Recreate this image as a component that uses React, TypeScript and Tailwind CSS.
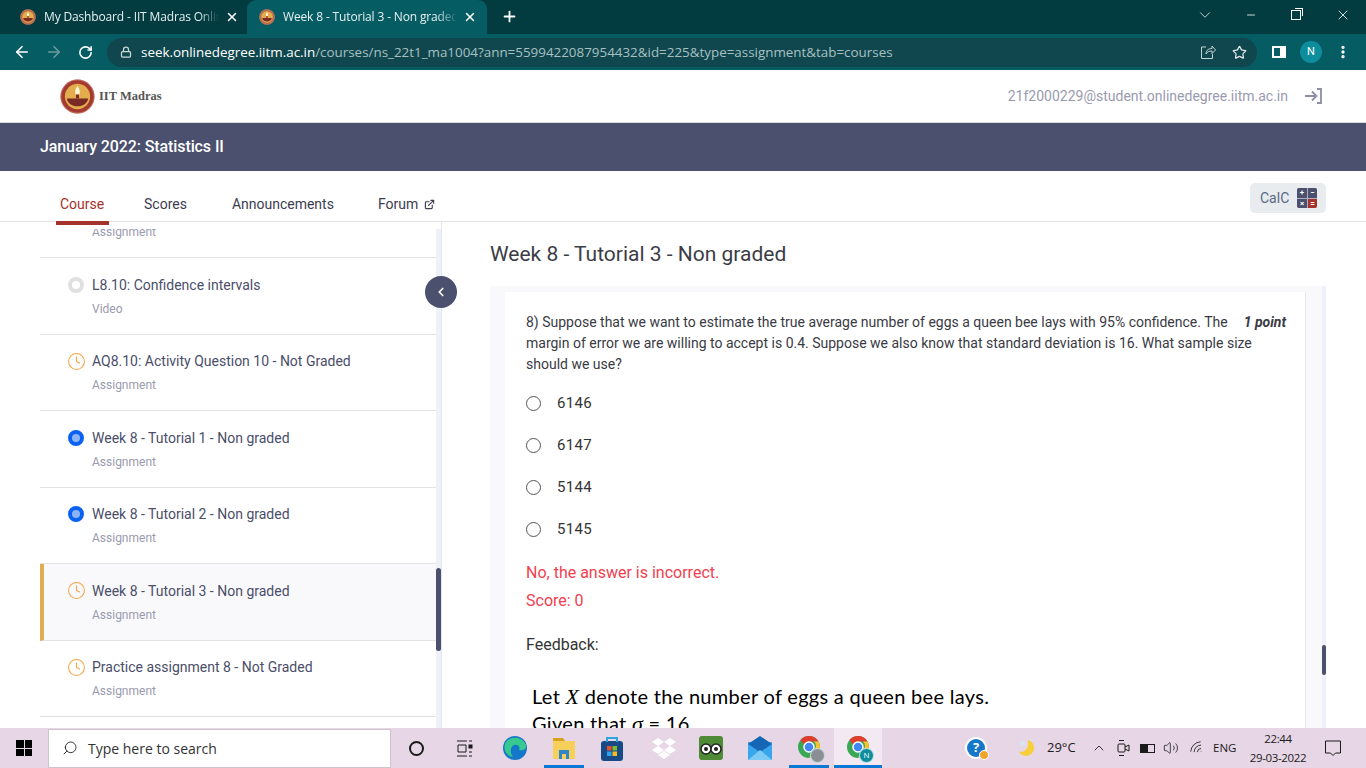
import type { ReactNode } from "react";
import { ArrowLeft, ArrowRight, ChevronDown, ChevronLeft, ChevronUp, Clock, ExternalLink, Lock, Minus, MoreVertical, Plus, RotateCw, Search, Star, Volume2, Wifi, X } from "lucide-react";

const font = "font-['Roboto',sans-serif]";

// Round IIT Madras emblem, used big in the header and small in the tabs
function Emblem({ size }: { size: number }) {
  return (
    <svg width={size} height={size} viewBox="0 0 36 36" className="shrink-0">
      <circle cx="18" cy="18" r="17.5" fill={size < 20 ? "#bb6b4c" : "#a4392f"} />
      <circle cx="18" cy="18" r="17" fill="none" stroke="#d98f7c" strokeWidth="0.6" />
      <circle cx="18" cy="18" r="13" fill="#e3ad4e" />
      <path d="M7 20h22c-1 5-5 8-11 8s-10-3-11-8z" fill="#7a2a24" />
      <path d="M18 7c2 3 3 6 2 9h-4c-1-3 0-6 2-9z" fill="#fff4d8" />
      <rect x="16.500" y="16" width="3" height="4" fill="#7a2a24" />
    </svg>
  );
}

function BrowserTab({ title, active }: { title: string; active?: boolean }) {
  return (
    <div className={`flex h-[34px] items-center ${active ? "w-[240px] rounded-t-[9px] bg-[#055c63] pl-[12px] pr-[10px]" : "w-[247px] pl-[20px] pr-[8px]"}`}>
      <Emblem size={16} />
      <span className="ml-[8px] min-w-0 flex-1 overflow-hidden whitespace-nowrap text-[12px] tracking-[-0.15px] text-[#e6f0f0] [mask-image:linear-gradient(to_left,transparent,black_20px)]">{title}</span>
      <X size={14} strokeWidth={2.5} className="ml-[6px] shrink-0 text-white" />
    </div>
  );
}

function BrowserBar() {
  return (
    <div className="font-['Open_Sans',sans-serif]">
      <div className="flex h-[34px] items-end bg-[#023c41]">
        <BrowserTab title="My Dashboard - IIT Madras Online" />
        <BrowserTab title="Week 8 - Tutorial 3 - Non graded" active />
        <Plus size={17} strokeWidth={2.5} className="mb-[9px] ml-[14px] text-white" />
        <div className="mb-[10px] ml-auto flex items-center text-white">
          <ChevronDown size={18} strokeWidth={1} className="mr-[31px]" />
          <Minus size={12} strokeWidth={1.6} className="mr-[34px]" />
          <div className="relative mr-[34px] h-[10px] w-[10px] border border-white">
            <div className="absolute -right-[3px] -top-[3px] h-[8px] w-[8px] border-r border-t border-white" />
          </div>
          <X size={16} strokeWidth={1.2} className="mr-[15px]" />
        </div>
      </div>
      <div className="flex h-[36px] items-center bg-[#055c63]">
        <ArrowLeft size={18} strokeWidth={2.2} className="ml-[13px] text-white" />
        <ArrowRight size={18} strokeWidth={2.2} className="ml-[14px] text-[#6d9a9e]" />
        <RotateCw size={15} strokeWidth={2.5} className="ml-[15px] text-white" />
        <div className="ml-[14px] flex h-[29px] w-[1150px] items-center rounded-full bg-[#10474e] pl-[13px]">
          <Lock size={12} strokeWidth={2.5} className="text-[#c9d6d7]" />
          <span className="ml-[9px] whitespace-nowrap text-[13.400px] text-white">seek.onlinedegree.iitm.ac.in</span>
          <span className="whitespace-nowrap text-[13.400px] text-[#a7c0c2]">/courses/ns_22t1_ma1004?ann=5599422087954432&amp;id=225&amp;type=assignment&amp;tab=courses</span>
          <svg width="16" height="16" viewBox="0 0 16 16" fill="none" stroke="#c4d2d3" strokeWidth="1" className="ml-auto">
            <path d="M6 3H1.500v11.500h11V10M6 10c0-4 3-5.500 6-5.500V2l3.500 4L12 9.500V7c-3 0-5 1-6 3z" />
          </svg>
          <Star size={15} strokeWidth={2} className="ml-[16px] mr-[10px] text-[#dfe8e8]" />
        </div>
        <div className="ml-[15px] h-[12px] w-[14px] border-2 border-white bg-[linear-gradient(to_right,#055c63_0_60%,#fff_60%)]" />
        <div className={`ml-[14px] flex h-[22px] w-[22px] items-center justify-center rounded-full bg-[#0e8d9d] text-[11px] text-white ${font}`}>N</div>
        <MoreVertical size={16} strokeWidth={3} className="ml-[13px] text-white" />
      </div>
    </div>
  );
}

function TaskIcon({ className, children }: { className: string; children: ReactNode }) {
  return (
    <svg width="26" height="26" viewBox="0 0 26 26" className={`shrink-0 ${className}`}>
      {children}
    </svg>
  );
}

function ChromeIcon({ badge, label }: { badge: string; label?: string }) {
  return (
    <div className="relative h-[24px] w-[24px]">
      <svg width="24" height="24" viewBox="0 0 24 24">
        <circle cx="12" cy="12" r="11" fill="#3aa757" />
        <path d="M12 1a11 11 0 0 1 9.500 5.500H12A5.500 5.500 0 0 0 7 9.500L3.500 5A11 11 0 0 1 12 1z" fill="#e33b2e" />
        <path d="M21.500 6.500A11 11 0 0 1 12 23l5-8a5.500 5.500 0 0 0 0-8.500z" fill="#fbc02d" />
        <circle cx="12" cy="12" r="5" fill="#4285f4" stroke="#fff" strokeWidth="1.500" />
      </svg>
      <div style={{ backgroundColor: badge }} className="absolute -bottom-[4px] -right-[4px] flex h-[15px] w-[15px] items-center justify-center rounded-full border border-[#bfe3ea] text-[8px] text-white">
        {label}
      </div>
    </div>
  );
}

function Taskbar() {
  return (
    <div className="flex h-[40px] items-center bg-[#e7d6e6] font-['Open_Sans',sans-serif] text-[#1b1b1b]">
      <div className="ml-[16px] grid h-[16px] w-[16px] shrink-0 grid-cols-2 gap-[1px]">
        <div className="bg-black" />
        <div className="bg-black" />
        <div className="bg-black" />
        <div className="bg-black" />
      </div>
      <div className="ml-[16px] flex h-[39px] w-[343px] shrink-0 items-center border border-[#cfc4ce] bg-white pl-[13px]">
        <Search size={16} strokeWidth={1.3} className="-scale-x-100" />
        <span className="ml-[10px] text-[14px] text-[#333]">Type here to search</span>
      </div>
      <div className="ml-[18px] h-[15px] w-[15px] shrink-0 rounded-full border-[2.5px] border-[#1b1b1b]" />
      <svg width="17" height="17" viewBox="0 0 17 17" fill="none" stroke="#1b1b1b" strokeWidth="1" className="ml-[32px] shrink-0">
        <path d="M1 1h10M1 16h10M2 5h8v7H2zM13 1h3M13 12h3M13 16h3" />
        <rect x="13" y="5" width="3" height="3" fill="#1b1b1b" />
      </svg>
      <TaskIcon className="ml-[29px]">
        <circle cx="13" cy="13" r="12" fill="#1577c7" />
        <path d="M3 9C6 1 20 0 24 10c1 4-3 6-7 5 2-3-1-6-5-5-3 1-5 7-1 12C5 21 1 15 3 9z" fill="#38c98f" />
      </TaskIcon>
      <div className="ml-[16px] flex h-[40px] w-[40px] shrink-0 items-center justify-center border-b-[3px] border-[#0a78d4] pt-[2px]">
        <svg width="24" height="22" viewBox="0 0 24 22">
          <path d="M1 1h10l2 3H1z" fill="#d9a21b" />
          <rect x="1" y="4" width="22" height="18" fill="#f7d05c" />
          <rect x="7" y="13" width="10" height="9" fill="#2f86c9" />
          <rect x="10" y="17" width="4" height="5" fill="#f7d05c" />
        </svg>
      </div>
      <TaskIcon className="ml-[15px]">
        <rect x="2" y="6" width="22" height="20" rx="3" fill="#174a87" />
        <path d="M8 7V3h10v4" fill="none" stroke="#2aa5dd" strokeWidth="2" />
        <rect x="8" y="11" width="4.500" height="4.500" fill="#e8532f" />
        <rect x="13.500" y="11" width="4.500" height="4.500" fill="#7cbb2c" />
        <rect x="8" y="16.500" width="4.500" height="4.500" fill="#2aa5ee" />
        <rect x="13.500" y="16.500" width="4.500" height="4.500" fill="#f9bb1c" />
      </TaskIcon>
      <TaskIcon className="ml-[26px]">
        <path d="M7 3l6 4-6 4-6-4zM19 3l6 4-6 4-6-4zM7 11l6 4-6 4-6-4zM19 11l6 4-6 4-6-4zM7 20l6-4 6 4-6 4z" fill="#fff" />
      </TaskIcon>
      <TaskIcon className="ml-[21px]">
        <rect x="1" y="1" width="24" height="24" rx="3" fill="#4f8a35" />
        <circle cx="8" cy="14" r="5" fill="#fff" stroke="#222" strokeWidth="1.500" />
        <circle cx="18" cy="14" r="5" fill="#fff" stroke="#222" strokeWidth="1.500" />
        <circle cx="8" cy="14" r="2" fill="#222" />
        <circle cx="18" cy="14" r="2" fill="#222" />
      </TaskIcon>
      <TaskIcon className="ml-[23px]">
        <rect x="1" y="7" width="24" height="18" fill="#38a6ea" />
        <path d="M1 9l12-8 12 8-12 8z" fill="#1567b5" />
        <path d="M1 25l12-10 12 10z" fill="#7bcbf5" />
      </TaskIcon>
      <div className="ml-[16px] flex h-[40px] w-[40px] shrink-0 items-center justify-center border-b-[3px] border-[#0a78d4]">
        <ChromeIcon badge="#8b8f94" />
      </div>
      <div className="ml-[5px] flex h-[40px] w-[48px] shrink-0 items-center justify-center border-b-[3px] border-[#0a78d4] bg-[#f3e9f2]">
        <ChromeIcon badge="#0e8d9d" label="N" />
      </div>
      <div className="relative ml-[83px] flex h-[22px] w-[22px] shrink-0 items-center justify-center rounded-full border-2 border-white bg-[#1577c7] text-[13px] font-bold text-white">
        ?
        <div className="absolute -bottom-[3px] -right-[4px] h-[10px] w-[10px] rounded-full border border-white bg-[#f0a52a]" />
      </div>
      <div className="ml-[30px] flex w-[18px] shrink-0 justify-center">
        <svg width="20" height="20" viewBox="0 0 20 20">
          <path d="M12 1a9 9 0 1 1-10 13c6 2 12-4 10-13z" fill="#f6cf3a" />
          <circle cx="6" cy="5" r="3" fill="#d8e4f0" />
        </svg>
      </div>
      <span className="ml-[12px] w-[28px] shrink-0 whitespace-nowrap text-[13px]">29°C</span>
      <ChevronUp size={16} strokeWidth={1.3} className="ml-[16px] shrink-0" />
      <svg width="14" height="18" viewBox="0 0 14 18" fill="none" stroke="#1b1b1b" className="ml-[9px] shrink-0">
        <rect x="2" y="5" width="7" height="8" rx="1" />
        <path d="M9 8l4-2v6l-4-2M3 1.500h5M3 16.500h5" />
      </svg>
      <div className="ml-[10px] h-[9px] w-[15px] shrink-0 border-[1.5px] border-[#1b1b1b] bg-[linear-gradient(to_right,#1b1b1b_0_55%,transparent_55%)]" />
      <Volume2 size={16} strokeWidth={1.2} className="ml-[8px] shrink-0" />
      <Wifi size={16} strokeWidth={1.2} className="ml-[10px] shrink-0 -rotate-45" />
      <span className="ml-[8px] w-[23px] shrink-0 text-[11.500px]">ENG</span>
      <div className="ml-[10px] flex w-[64px] shrink-0 flex-col items-center text-[11.500px] leading-[19px] tracking-[-0.35px]">
        <span>22:44</span>
        <span className="whitespace-nowrap">29-03-2022</span>
      </div>
      <svg width="18" height="18" viewBox="0 0 18 18" fill="none" stroke="#1b1b1b" className="ml-[14px] shrink-0">
        <path d="M1.500 2h15v12h-5l-2.500 2.500L6.500 14h-5z" />
      </svg>
    </div>
  );
}

function SideIcon({ kind }: { kind: string }) {
  if (kind === "todo") return <Clock size={19} strokeWidth={1.3} className="-m-[1.5px] shrink-0 text-[#f6a545]" />;
  if (kind === "done") {
    return <div className="h-[16px] w-[16px] shrink-0 rounded-full border-[4px] border-[#0b62f2] bg-[#8db4f9]" />;
  }
  return <div className="h-[16px] w-[16px] shrink-0 rounded-full border-[4px] border-[#e0e0e0] bg-white" />;
}

const lessons = [
  { title: "L8.10: Confidence intervals", type: "Video", kind: "none" },
  { title: "AQ8.10: Activity Question 10 - Not Graded", type: "Assignment", kind: "todo" },
  { title: "Week 8 - Tutorial 1 - Non graded", type: "Assignment", kind: "done" },
  { title: "Week 8 - Tutorial 2 - Non graded", type: "Assignment", kind: "done" },
  { title: "Week 8 - Tutorial 3 - Non graded", type: "Assignment", kind: "todo", active: true },
  { title: "Practice assignment 8 - Not Graded", type: "Assignment", kind: "todo" },
];

function Sidebar() {
  return (
    <div className="relative w-[442px] shrink-0 border-r border-[#e3e5f1] pl-[40px] pt-[7px]">
      <div className="h-full overflow-hidden border-r-[5px] border-[#eff0f8]">
        <div className="-mt-[6px] h-[35px] border-b border-[#e2e2e2] pl-[52px] text-[12px] leading-[18px] text-[#9a9aae]">
          Assignment
        </div>
        {lessons.map((l) => (
          <div
            key={l.title}
            className={`flex h-[76.500px] items-start border-b border-[#e2e2e2] pt-[16.750px] ${l.active ? "border-l-[4px] bg-[#f9f9fc] pl-[24px] [border-left-color:#e0ad52]" : "pl-[28px]"}`}
          >
            <div className="mt-[2px] flex">
              <SideIcon kind={l.kind} />
            </div>
            <div className="ml-[8px]">
              <div className="text-[14px] leading-[20px] text-[#4a4e69]">{l.title}</div>
              <div className="mt-[6px] text-[12px] leading-[16px] text-[#9a9aae]">{l.type}</div>
            </div>
          </div>
        ))}
      </div>
      <div className="absolute right-[0px] top-[346px] h-[83px] w-[5px] rounded-full bg-[#4a506d]" />
      <div className="absolute -right-[16px] top-[54px] flex h-[32px] w-[32px] items-center justify-center rounded-full bg-[#4a506d] text-white">
        <ChevronLeft size={14} strokeWidth={3} />
      </div>
    </div>
  );
}

function Option({ value }: { value: string }) {
  return (
    <div className="flex h-[42px] items-center">
      <div className="h-[15px] w-[15px] rounded-full border border-[#555] bg-white" />
      <span className="ml-[16px] text-[15px] tracking-[0.3px] text-[#333]">{value}</span>
    </div>
  );
}

function Question() {
  return (
    <div className="min-w-0 flex-1 pl-[48px] pr-[40px]">
      <h1 className="pt-[18px] text-[21px] leading-[28px] text-[#3c3c46]">Week 8 - Tutorial 3 - Non graded</h1>
      <div className="relative mt-[18px] h-[600px] border-r-[4px] border-[#eef0fb] bg-[#f9f9fc] pl-[15px] pr-[16px] pt-[6px]">
        <div className="h-full border-r border-[#e8e8e8] bg-white pl-[21px] pr-[19px] pt-[20px]">
          <div className="text-[14px] leading-[21px] text-[#3a3a44]">
            <div className="float-right ml-[8px] text-[14px] font-bold italic">1 point</div>
            8) Suppose that we want to estimate the true average number of eggs a queen bee lays with 95% confidence. The margin of error we are willing to accept is 0.4. Suppose we also know that standard deviation is 16. What sample size should we use?
          </div>
          <div className="mt-[7px]">
            <Option value="6146" />
            <Option value="6147" />
            <Option value="5144" />
            <Option value="5145" />
          </div>
          <div className="mt-[9px] text-[16px] leading-[28px] text-[#f2404f]">No, the answer is incorrect.</div>
          <div className="text-[16px] leading-[28px] text-[#f2404f]">Score: 0</div>
          <div className="mt-[16px] text-[16px] leading-[28px] text-[#333]">Feedback:</div>
          <div className="ml-[6px] mt-[24px] font-['Lato',sans-serif] text-[20px] leading-[26px] tracking-[0.3px] text-black">
            <div>
              Let <i className="font-['Liberation_Serif',serif] text-[22px]">X</i> denote the number of eggs a queen bee lays.
            </div>
            <div>
              Given that <i className="font-['Liberation_Serif',serif] text-[22px]">σ</i> = 16
            </div>
          </div>
        </div>
        <div className="absolute -right-[4px] top-[359px] h-[30px] w-[4px] rounded-full bg-[#4a506d]" />
      </div>
    </div>
  );
}

export default function App() {
  return (
    <div className="flex h-[768px] w-[1366px] flex-col overflow-hidden bg-white">
      <BrowserBar />
      <div className={`flex min-h-0 flex-1 flex-col ${font}`}>
        <div className="flex h-[53px] shrink-0 items-center border-b-[1px] border-[#dcdcdc] pl-[60px] pr-[44px]">
          <Emblem size={35} />
          <span className="ml-[4px] font-['Liberation_Serif',serif] text-[12.500px] font-bold text-[#555]">IIT Madras</span>
          <span className="ml-auto text-[14px] text-[#9a9aae]">21f2000229@student.onlinedegree.iitm.ac.in</span>
          <svg width="18" height="16" viewBox="0 0 18 16" fill="none" stroke="#8d8da4" strokeWidth="1.800" className="ml-[16px]">
            <path d="M1 8h11M8 3.500L12.500 8 8 12.500M13 1h4v14h-4" />
          </svg>
        </div>
        <div className="flex h-[48px] shrink-0 items-center bg-[#4a506d] pl-[40px] text-[16px] font-medium tracking-[-0.1px] text-white">
          January 2022: Statistics II
        </div>
        <div className="relative z-10 flex h-[51px] shrink-0 items-start border-b border-[#e2e2e2] pl-[56px] text-[14px] text-[#3c3c50]">
          <div className="h-[54px] w-[53px] border-b-[4px] border-[#a4332b] pl-[4px] pt-[23px] text-[#a4332b]">Course</div>
          <div className="ml-[35px] pt-[23px]">Scores</div>
          <div className="ml-[45px] pt-[23px]">Announcements</div>
          <div className="ml-[44px] flex items-start pt-[23px]">
            Forum
            <ExternalLink size={11} strokeWidth={2.5} className="ml-[6px] mt-[5px]" />
          </div>
          <div className="absolute right-[40px] top-[12px] flex h-[30px] w-[76px] items-center rounded-[5px] bg-[#e9ecef] pl-[10px] text-[14px] text-[#5a6a85]">
            CalC
            <div className="ml-[8px] grid h-[20px] w-[20px] grid-cols-2 gap-[1px] overflow-hidden rounded-[2px] bg-[#aeb2c0] text-center text-[8px] font-bold leading-[10px] text-white">
              <div className="bg-[#4a506d]">+</div>
              <div className="bg-[#4a506d]">−</div>
              <div className="bg-[#4a506d]">×</div>
              <div className="bg-[#a4332b]">=</div>
            </div>
          </div>
        </div>
        <div className="flex min-h-0 flex-1 overflow-hidden">
          <Sidebar />
          <Question />
        </div>
      </div>
      <Taskbar />
    </div>
  );
}
